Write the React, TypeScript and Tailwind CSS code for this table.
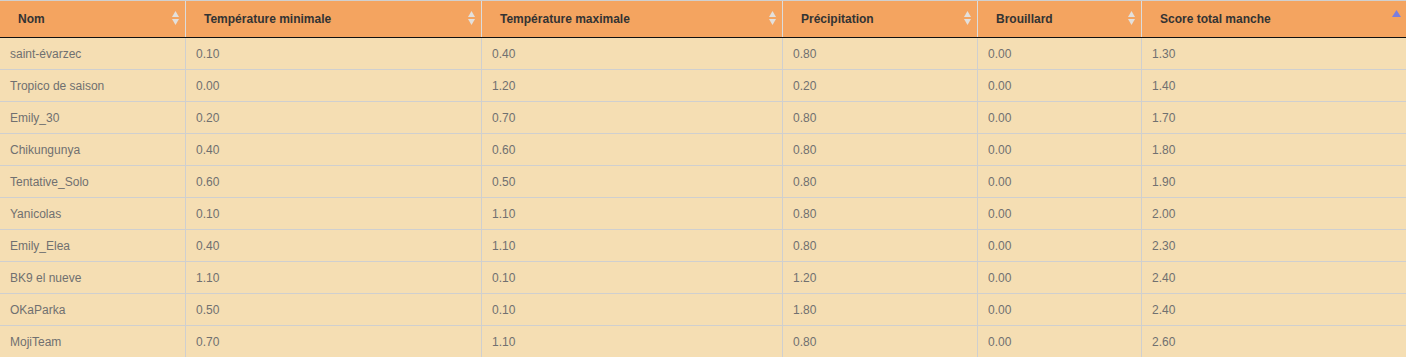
import React from 'react';

const columns = [
    { label: 'Nom', width: 'w-[185px]', first: true },
    { label: 'Température minimale', width: 'w-[296px]' },
    { label: 'Température maximale', width: 'w-[301px]' },
    { label: 'Précipitation', width: 'w-[195px]' },
    { label: 'Brouillard', width: 'w-[164px]' },
    { label: 'Score total manche', width: 'flex-1', sorted: true },
];

const rows = [
    ['saint-évarzec', '0.10', '0.40', '0.80', '0.00', '1.30'],
    ['Tropico de saison', '0.00', '1.20', '0.20', '0.00', '1.40'],
    ['Emily_30', '0.20', '0.70', '0.80', '0.00', '1.70'],
    ['Chikungunya', '0.40', '0.60', '0.80', '0.00', '1.80'],
    ['Tentative_Solo', '0.60', '0.50', '0.80', '0.00', '1.90'],
    ['Yanicolas', '0.10', '1.10', '0.80', '0.00', '2.00'],
    ['Emily_Elea', '0.40', '1.10', '0.80', '0.00', '2.30'],
    ['BK9 el nueve', '1.10', '0.10', '1.20', '0.00', '2.40'],
    ['OKaParka', '0.50', '0.10', '1.80', '0.00', '2.40'],
    ['MojiTeam', '0.70', '1.10', '0.80', '0.00', '2.60'],
];

function SortBoth() {
    return (
        <svg className="absolute right-[6px] top-[10px]" width="7" height="14" viewBox="0 0 7 14">
            <polygon points="3.5,0 7,6 0,6" fill="#e3e0dc" />
            <polygon points="0,8 7,8 3.5,14" fill="#e3e0dc" />
        </svg>
    );
}

function SortAsc() {
    return (
        <svg className="absolute right-[5px] top-[9px]" width="9" height="7" viewBox="0 0 9 7">
            <polygon points="4.5,0 9,7 0,7" fill="#7a7ee0" />
        </svg>
    );
}

export default function App() {
    return (
        <div className="w-[1406px] h-[357px] overflow-hidden bg-[#f5deb3] font-['Liberation_Sans',Arial,sans-serif] text-[12px]">
            <div className="flex h-[38px] bg-[#f4a460] border-t border-[#d0d0d0] border-b border-b-[#111]">
                {columns.map((col) => (
                    <div
                        key={col.label}
                        className={`relative ${col.width} shrink-0 flex items-center pl-[18px] font-bold text-[#333] ${col.first ? '' : 'border-l border-[#dcdcdc]'}`}
                    >
                        {col.label}
                        {col.sorted ? <SortAsc /> : <SortBoth />}
                    </div>
                ))}
            </div>
            {rows.map((row, i) => (
                <div key={i} className="flex h-[32px] border-b border-[#cfcfcf]">
                    {row.map((cell, j) => (
                        <div
                            key={j}
                            className={`${columns[j].width} shrink-0 flex items-center pl-[10px] text-[#707070] ${j === 0 ? '' : 'border-l border-[#cfcfcf]'}`}
                        >
                            {cell}
                        </div>
                    ))}
                </div>
            ))}
        </div>
    );
}
